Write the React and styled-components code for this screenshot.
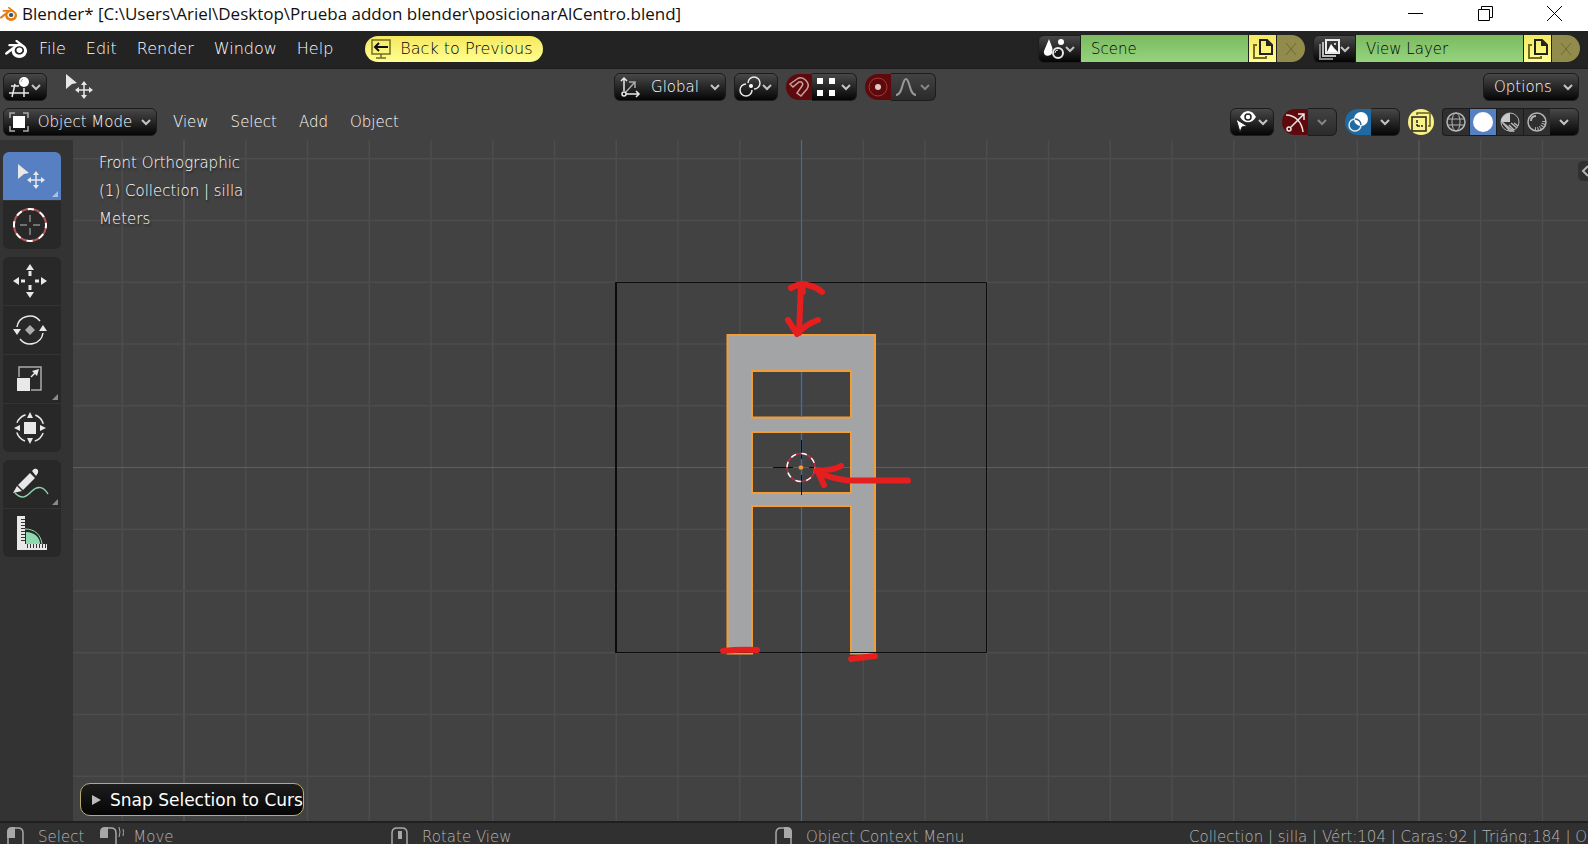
import styled, { createGlobalStyle, css } from 'styled-components'
import { SiBlender } from 'react-icons/si'

const GlobalStyle = createGlobalStyle`
  * { box-sizing: border-box; }
  body { margin: 0; background: #303030; }
  button, input {
    margin: 0;
    padding: 0;
    border: 0;
    background: none;
    color: inherit;
    font: inherit;
  }
`

const Screen = styled.div`
  display: flex;
  flex-direction: column;
  height: 100vh;
  overflow: hidden;
  color: #fff;
  font-family: "DejaVu Sans", Verdana, sans-serif;
  font-size: 15px;
  font-weight: 200;
  line-height: 20px;
  white-space: nowrap;
`

const Svg = styled.svg`
  display: block;
  flex: none;
  overflow: visible;
  fill: none;
  stroke: ${({ $color }) => $color || '#e8e8e8'};
  stroke-width: ${({ $stroke }) => $stroke || 2};
`

/* ---------- title bar ---------- */

const TitleBar = styled.header`
  display: flex;
  align-items: center;
  height: 31px;
  flex: none;
  padding-bottom: 4px;
  overflow: hidden;
  background: #fff;
  color: #111;
`

const TitleLogo = styled.div`
  display: flex;
  width: 22px;
  justify-content: flex-end;
  padding-right: 5px;
`

const Title = styled.h1`
  flex: 1;
  margin: 0;
  font-family: "Open Sans", "Noto Sans", sans-serif;
  font-size: 17px;
  font-weight: 400;
  line-height: 28px;
`

const WindowButton = styled.button`
  display: flex;
  justify-content: center;
  align-items: center;
  width: 70px;
  height: 28px;

  &:last-child { width: 68px; }
`

/* ---------- menus ---------- */

const MenuBar = styled.nav`
  display: flex;
  align-items: center;
  height: 38px;
  flex: none;
  padding: 0 8px 2px 5px;
  border-bottom: 1px solid #1c1c1c;
  background: #232323;
`

const Menus = styled.div`
  display: flex;
  flex: 1;
  align-items: center;
  margin-left: ${({ $left }) => $left}px;
  font-size: ${({ $size }) => $size || 15}px;
`

const MenuButton = styled.button`
  height: 28px;
  padding: 0 ${({ $pad }) => $pad || 11}px;
`

const BackButton = styled.button`
  display: flex;
  align-items: center;
  gap: 9px;
  height: 26px;
  margin-left: 22px;
  padding: 0 10px 0 6px;
  border-radius: 13px;
  background: linear-gradient(#f5e860, #ffff90);
  color: #000;
`

const darkGradient = css`
  background: linear-gradient(#484848, #050505);
`

const fadedGradient = css`
  background: linear-gradient(#424242, #2b2b2b);
`

const DropButton = styled.button`
  display: flex;
  align-items: center;
  justify-content: space-between;
  width: ${({ $width }) => $width}px;
  height: 28px;
  padding: 0 5px;
  border: 1px solid #1c1c1c;
  border-radius: ${({ $join }) => ({ left: '0 6px 6px 0', right: '6px 0 0 6px' }[$join] || '6px')};
  ${({ $faded }) => ($faded ? fadedGradient : darkGradient)}
  border-left-width: ${({ $join }) => ($join === 'left' ? 0 : 1)}px;
  ${({ $only }) => $only && 'justify-content: center;'}
`

const ToggleButton = styled.button`
  display: flex;
  align-items: center;
  justify-content: center;
  width: 26px;
  height: 26px;
  border-radius: ${({ $round }) => ($round ? '13px' : '13px 0 0 13px')};
  background: ${({ $bg }) => $bg};
`

const Joined = styled.div`
  display: flex;
  align-items: center;
`

const OptionsLabel = styled.span`
  padding-left: 5px;
`

const DataBlocks = styled.div`
  display: flex;
  gap: 8px;
`

const NameInput = styled.input`
  width: 168px;
  height: 27px;
  padding: 0 10px;
  border-right: 1px solid #222;
  background: linear-gradient(#7cba60, #94d47c);
  color: #000;
  outline: none;
`

const CopyButton = styled.button`
  display: flex;
  align-items: center;
  justify-content: center;
  width: 28px;
  height: 27px;
  border-right: 1px solid #222;
  background: linear-gradient(#f5e860, #ffff90);
`

const RemoveButton = styled.button`
  display: flex;
  align-items: center;
  justify-content: center;
  width: 28px;
  height: 27px;
  border-radius: 0 14px 14px 0;
  background: #918b4c;
`

/* ---------- viewport header ---------- */

const ViewHeader = styled.div`
  display: grid;
  gap: 7px;
  flex: none;
  padding: 4px 9px 4px 3px;
  background: #424242;
`

const ToolRow = styled.div`
  display: grid;
  grid-template-columns: 1fr auto 1fr;
  align-items: center;
`

const Group = styled.div`
  display: flex;
  align-items: center;
  justify-self: ${({ $align }) => $align || 'start'};
  gap: ${({ $gap }) => $gap || 8}px;
`

const CenterGroup = styled(Group)`
  margin-right: 32px;
`

const HeaderRow = styled.div`
  display: flex;
  align-items: center;
`

const Shading = styled.div`
  display: flex;
  height: 28px;
`

const ShadeButton = styled.button`
  display: flex;
  align-items: center;
  justify-content: center;
  width: 27px;
  border: solid #1c1c1c;
  border-width: 1px 0 1px 1px;
  background: ${({ $active }) => ($active ? '#5680c2' : '#2f2f2f')};

  &:first-child { border-radius: 4px 0 0 4px; }
`

/* ---------- workspace ---------- */

const Workspace = styled.main`
  display: flex;
  flex: 1;
  min-height: 0;
`

const Toolbar = styled.aside`
  display: flex;
  flex-direction: column;
  gap: 8px;
  width: 73px;
  flex: none;
  padding: 12px 12px 0 3px;
  background: #333;
`

const ToolGroup = styled.div`
  display: grid;
  gap: 1px;
  border-radius: 6px;
  overflow: hidden;
`

const ToolButton = styled.button`
  position: relative;
  display: flex;
  align-items: center;
  padding-left: 9px;
  height: 48px;
  background: ${({ $active }) => ($active ? '#5680c2' : '#282828')};

  ${({ $more, $active }) => $more && css`
    &::after {
      content: '';
      position: absolute;
      right: 3px;
      bottom: 3px;
      border: 3px solid transparent;
      border-right-color: ${$active ? '#a9c0e6' : '#8a8a8a'};
      border-bottom-color: ${$active ? '#a9c0e6' : '#8a8a8a'};
    }
  `}
`

const Viewport = styled.section`
  position: relative;
  flex: 1;
  min-width: 0;
  background: #424242;
  overflow: hidden;
`

const Canvas = styled.svg`
  display: block;
  width: 100%;
  height: 100%;
`

const ViewInfo = styled.div`
  position: absolute;
  top: 9px;
  left: 26px;
  line-height: 28px;
  text-shadow: 1px 2px 2px #222;
`

const SideTab = styled.button`
  position: absolute;
  top: 21px;
  right: 0;
  display: flex;
  align-items: center;
  width: 10px;
  height: 20px;
  padding-left: 4px;
  border-radius: 5px 0 0 5px;
  background: #303030;
  overflow: hidden;
`

const OperatorPanel = styled.button`
  position: absolute;
  left: 7px;
  bottom: 5px;
  display: flex;
  align-items: center;
  gap: 9px;
  width: 224px;
  height: 33px;
  padding: 0 0 0 11px;
  border: 1px solid #b5ac6c;
  border-radius: 10px;
  background: linear-gradient(#1d1d1d, #050505);
  font-size: 17px;
  font-weight: 400;
  overflow: hidden;
`

/* ---------- status bar ---------- */

const StatusBar = styled.footer`
  display: grid;
  grid-template-columns: 384fr 384fr 414fr 399fr;
  height: 23px;
  flex: none;
  padding: 4px 0 0 7px;
  border-top: 2px solid #1f1f1f;
  background: #303030;
  color: #b4b4b4;
  overflow: hidden;
`

const Hints = styled.div`
  display: flex;
  gap: 16px;
  min-width: 0;
`

const Hint = styled.div`
  display: flex;
  gap: 14px;
`

const Stats = styled.div`
  min-width: 0;
  overflow: hidden;
`

/* ---------- icons ---------- */

const Chevron = ({ dim }) => (
  <Svg width="10" height="8" $color={dim ? '#858585' : '#c4c4c4'} $stroke={2}>
    <path d="M1 2l4 4 4-4" />
  </Svg>
)

const CopyIcon = () => (
  <Svg width="20" height="20" $color="#222">
    <path d="M7 1h7l5 5v9H7z" />
    <path d="M13 1v6h6z" fill="#222" stroke="none" />
    <path d="M4 6H1v13h12v-2" stroke="#746c25" />
  </Svg>
)

const CrossIcon = () => (
  <Svg width="14" height="14" $color="#6f6a3a" $stroke={1}>
    <path d="M2 1l10 12M12 1L2 13" />
  </Svg>
)

const SceneIcon = () => (
  <Svg width="20" height="22">
    <path d="M5 1L0 13c-1 6 7 6 8 2 0-2 1-4 0-6z" fill="#fff" stroke="none" />
    <circle cx="17" cy="4" r="3" fill="#fff" stroke="none" />
    <circle cx="14" cy="15" r="5" fill="#161616" />
    <path d="M11 15a3 3 0 0 1 3-3" strokeWidth="1" />
  </Svg>
)

const LayerIcon = () => (
  <Svg width="20" height="20">
    <path d="M1 5v15h13" stroke="#888" />
    <path d="M4 3v14h13" stroke="#bbb" />
    <path d="M7 1h13v13H7z" />
    <path d="M8 13l4-8 3 4 4 4z" fill="#fff" stroke="none" />
    <circle cx="16" cy="5" r="1" fill="#fff" stroke="none" />
  </Svg>
)

const BackIcon = () => (
  <Svg width="20" height="20" $color="#746c25" $stroke={1.5}>
    <path d="M1 1h18v14H1zM10 15v4M5 19h10" />
    <path d="M17 8H4M8 4L4 8l4 4" stroke="#111" strokeWidth="2" />
  </Svg>
)

const EditorIcon = () => (
  <Svg width="21" height="21" $stroke={1.5}>
    <path d="M0 16h20M2 9h8M6 7L3 20M15 11v9" />
    <circle cx="15" cy="5" r="5" fill="#fff" stroke="none" />
    <path d="M12 5a3 3 0 0 1 2-3" stroke="#aaa" strokeWidth="1" />
  </Svg>
)

const MoveSelectIcon = ({ size = 28, viewBox = '0 0 28 28' }) => (
  <Svg width={size} height={size} viewBox={viewBox} $stroke={1.5}>
    <path d="M1 1l11 9-5 1-6 5z" fill="#e8e8e8" stroke="none" />
    <path d="M19 10v14M12 17h14" />
    <path d="M19 8l3 4h-6zM19 26l3-4h-6zM10 17l4-3v6zM28 17l-4-3v6z" fill="#e8e8e8" stroke="none" />
  </Svg>
)

const ObjectIcon = () => (
  <Svg width="20" height="20" $color="#aaa" $stroke={1.5}>
    <path d="M1 6V1h5M14 1h5v5M19 14v5h-5M6 19H1v-5" />
    <path d="M4 4h12v12H4z" fill="#fff" stroke="none" />
  </Svg>
)

const AxesIcon = () => (
  <Svg width="20" height="20" $stroke={1.5}>
    <path d="M5 16L15 5M9 5h6v6" stroke="#aaa" />
    <path d="M4 14V1M1 4l3-3 3 3M6 17h13M16 14l3 3-3 3" />
    <circle cx="4" cy="17" r="2" />
  </Svg>
)

const PivotIcon = () => (
  <Svg width="20" height="20" $stroke={1.5}>
    <path d="M8 6a6 6 0 1 1 6 6" />
    <path d="M6 7a6 6 0 1 0 6 6" />
    <circle cx="11" cy="9" r="2" fill="#fff" stroke="none" />
  </Svg>
)

const MagnetIcon = () => (
  <Svg width="20" height="20" $color="#c7a0a0" $stroke={1.5}>
    <path d="M1 7l7-5C14-2 22 6 18 12l-6 7-4-3 5-7c2-3-1-5-3-4l-6 5z" />
  </Svg>
)

const DotsIcon = () => (
  <Svg width="18" height="18">
    <path d="M0 0h6v6H0zM12 0h6v6h-6zM0 12h6v6H0zM12 12h6v6h-6z" fill="#fff" stroke="none" />
  </Svg>
)

const ProportionalIcon = () => (
  <Svg width="20" height="20" $color="#9c3c3c" $stroke={1}>
    <circle cx="10" cy="10" r="9" />
    <circle cx="10" cy="10" r="3" fill="#e0c8c8" stroke="none" />
  </Svg>
)

const FalloffIcon = () => (
  <Svg width="20" height="18" $color="#999">
    <path d="M0 17C7 17 6 1 10 1s3 16 10 16" />
  </Svg>
)

const EyeCursorIcon = () => (
  <Svg width="20" height="22">
    <path d="M4 6c4-8 12-8 16 0-4 7-12 7-16 0z" fill="#fff" stroke="none" />
    <circle cx="12" cy="6" r="3" stroke="#222" strokeWidth="1.5" />
    <path d="M0 8l11 7-5 1-2 5z" fill="#fff" stroke="#222" strokeWidth="1" />
  </Svg>
)

const GizmoIcon = () => (
  <Svg width="21" height="21" $stroke={1.5}>
    <path d="M1 3c9 0 16 7 17 17" />
    <path d="M6 15L19 2M13 2h6v6" />
    <circle cx="4" cy="17" r="2" />
  </Svg>
)

const OverlayIcon = () => (
  <Svg width="20" height="20" $stroke={1.5}>
    <circle cx="13" cy="7" r="7" fill="#fff" stroke="none" />
    <path d="M7 7a6 6 0 1 0 6 6" />
    <path d="M7 7a6 6 0 0 1 6 6" stroke="#206aa4" />
  </Svg>
)

const XrayIcon = () => (
  <Svg width="20" height="20" $color="#222" $stroke={1.5}>
    <path d="M1 5h14v14H1z" />
    <path d="M6 3V1h13v13h-2" stroke="#665f20" />
    <path d="M6 8v6M6 14h6" strokeDasharray="3 1" />
  </Svg>
)

const WireIcon = () => (
  <Svg width="20" height="20" $color="#b5b5b5" $stroke={1}>
    <circle cx="10" cy="10" r="9" strokeWidth="1.5" />
    <ellipse cx="10" cy="10" rx="4" ry="9" />
    <path d="M2 7h16M2 13h16" />
  </Svg>
)

const SolidIcon = () => (
  <Svg width="20" height="20">
    <circle cx="10" cy="10" r="10" fill="#fff" stroke="none" />
  </Svg>
)

const MaterialIcon = () => (
  <Svg width="20" height="20" $color="#b5b5b5" $stroke={1.5}>
    <circle cx="10" cy="10" r="9" strokeWidth="1" />
    <path d="M10 1v9H1a9 9 0 0 1 9-9z" fill="#c9c9c9" stroke="none" />
    <path d="M2 10l8 9h3zM9 13l5 5M11 11l6 5M14 11l4 3" />
  </Svg>
)

const RenderIcon = () => (
  <Svg width="20" height="20" $color="#b5b5b5" $stroke={1.5}>
    <circle cx="10" cy="10" r="9" />
    <path d="M4 9c0-3 2-5 5-5" strokeWidth="2" />
    <path d="M17 9a8 8 0 0 1-9 8" strokeWidth="4" strokeDasharray="1 1.5" />
  </Svg>
)

const CursorToolIcon = () => (
  <Svg width="36" height="36">
    <circle cx="18" cy="18" r="16" stroke="#b55757" />
    <circle cx="18" cy="18" r="16" stroke="#fff" strokeDasharray="6.3 6.3" strokeDashoffset="3" />
    <path d="M18 8v7M18 21v7M8 18h7M21 18h7" stroke="#bbb" strokeWidth="1" />
  </Svg>
)

const MoveIcon = () => (
  <Svg width="36" height="36" $stroke={3}>
    <path d="M18 8v5M18 22v5M9 18h4M23 18h4" />
    <path d="M18 1l4 6h-8zM18 35l4-6h-8zM1 18l6-4v8zM35 18l-6-4v8z" fill="#e8e8e8" stroke="none" />
  </Svg>
)

const RotateIcon = () => (
  <Svg width="36" height="36" $stroke={1.5}>
    <path d="M5 15A13 13 0 0 1 28 9M31 21A13 13 0 0 1 8 27" />
    <path d="M1 17h8l-4 6zM27 19h8l-4-6z" fill="#e8e8e8" stroke="none" />
    <path d="M18 13l5 5-5 5-5-5z" fill="#aaa" stroke="none" />
  </Svg>
)

const ScaleIcon = () => (
  <Svg width="36" height="36" $stroke={1.5}>
    <path d="M7 16V6h22v23H19" stroke="#aaa" />
    <path d="M5 17h13v13H5z" fill="#e8e8e8" stroke="none" />
    <path d="M19 16l6-6" />
    <path d="M27 8l-2 7-5-5z" fill="#e8e8e8" stroke="none" />
  </Svg>
)

const TransformIcon = () => (
  <Svg width="36" height="36" $stroke={1.5}>
    <circle cx="18" cy="18" r="14" strokeDasharray="12 10" strokeDashoffset="-5" />
    <path d="M12 12h12v12H12z" fill="#e8e8e8" stroke="none" />
    <path d="M18 2l3 6h-6zM18 34l3-6h-6zM2 18l6-3v6zM34 18l-6-3v6z" fill="#e8e8e8" stroke="none" />
  </Svg>
)

const AnnotateIcon = () => (
  <Svg width="36" height="36" $stroke={1.5}>
    <path d="M3 27c7 7 11 4 17-2s12-4 16 3" stroke="#8fd3ae" />
    <path d="M6 19L18 7l5 5-12 12zM20 5l2-2c3-1 5 1 4 4l-2 3zM5 20l5 5-9 2z" fill="#e8e8e8" stroke="none" />
  </Svg>
)

const MeasureIcon = () => (
  <Svg width="36" height="36">
    <path d="M14 29V17c8 0 14 5 14 12z" fill="#8fd9b0" stroke="none" />
    <path d="M13 14c10 0 16 6 17 15" stroke="#8fd9b0" strokeWidth="1" />
    <path d="M5 1h8v28h22v6H5z" fill="#e8e8e8" stroke="none" />
    <path d="M11 4v23" stroke="#333" strokeWidth="4" strokeDasharray="1 2" />
    <path d="M15 31h19" stroke="#333" strokeWidth="4" strokeDasharray="1 2" />
  </Svg>
)

const MouseIcon = ({ button }) => (
  <Svg width="17" height="24" $color="#a8a8a8" $stroke={1.5}>
    <path d="M1 24V6q0-5 5-5h5q5 0 5 5v18" />
    {button === 'left' && <path d="M0 11V5q0-5 5-5h3v11z" fill="#a8a8a8" stroke="none" />}
    {button === 'right' && <path d="M17 11V5q0-5-5-5H9v11z" fill="#a8a8a8" stroke="none" />}
    {button === 'middle' && <path d="M9 4v8" strokeWidth="4" />}
  </Svg>
)

const DragMouseIcon = () => (
  <Svg width="19" height="24" $color="#a8a8a8" $stroke={1.5}>
    <path d="M8 1h3q5 0 5 5v18" />
    <path d="M0 11V5q0-5 5-5h3v11z" fill="#a8a8a8" stroke="none" />
    <path d="M19 0q2 5 0 10M23 2q1 3 0 7" strokeWidth="1" />
  </Svg>
)

/* ---------- scene drawing ---------- */

const CENTER = { x: 801.5, y: 467.5 }
const CELL = 61.75
const cells = Array.from({ length: 61 }, (_, i) => i - 30).filter((i) => i !== 0)
const holes = [
  { y: 371, h: 47 },
  { y: 432, h: 61 },
]

function Scene() {
  return (
    <Canvas viewBox="73 140 1515 681" preserveAspectRatio="xMidYMid slice" aria-label="Front view of a chair">
      {cells.map((i) => (
        <g key={i} stroke={i % 10 === 0 ? '#575757' : '#4d4d4d'} strokeWidth="1.5">
          <path d={`M${CENTER.x + i * CELL} -900V1900`} />
          <path d={`M-1200 ${CENTER.y + i * CELL}H2800`} />
        </g>
      ))}
      <path d={`M-1200 ${CENTER.y}H2800`} stroke="#b03a4c" strokeWidth="1.2" />
      <path d={`M${CENTER.x} -900V1900`} stroke="#3a6dae" strokeWidth="1.2" />

      <path
        d="M727.5 335H875V653.5H851V506H752V653.5H727.5zM752 371V417.5H851V371zM752 432V493H851V432z"
        fill="#a3a4a5"
        fillRule="evenodd"
        stroke="#f59d35"
        strokeWidth="2"
      />
      {holes.map(({ y, h }) => (
        <path key={y} d={`M${CENTER.x} ${y + 1}v${h - 2}`} stroke="#3a6dae" strokeWidth="1.2" />
      ))}
      <path d="M616 282.5H986.5V652.5H616" fill="none" stroke="#0c0c0c" />
      <path d="M616 282V653" stroke="#0c0c0c" strokeWidth="2" />

      <path d="M773 467.5h20M809 467.5h20M801.5 440v19M801.5 475v20" stroke="#0c0c0c" />
      <circle cx="801" cy="467.5" r="14" fill="none" stroke="#c02a3c" strokeWidth="1.5" />
      <circle cx="801" cy="467.5" r="14" fill="none" stroke="#fff" strokeWidth="1.5" strokeDasharray="5.5 5.5" />
      <circle cx="801" cy="467.5" r="2.5" fill="#f59d35" stroke="#5a3c1a" strokeWidth="0.5" />

      <g fill="none" stroke="#e61e1e" strokeWidth="6" strokeLinecap="round" strokeLinejoin="round">
        <path d="M801 284L799 333M791 288Q802 282 807 285Q817 287 822 292M788 320L797 334Q806 324 818 320" />
        <path d="M802 286l1 6" />
        <path d="M908 480.5H848Q828 478 816 471M841 466Q832 471 817 470L824 485" />
        <path d="M723 651Q740 649 757 650M851 659L875 656" />
      </g>
    </Canvas>
  )
}

const DataBlock = ({ icon, label, value }) => (
  <Joined>
    <DropButton $width={43} $join="right" aria-label={`Browse ${label}`}>
      {icon}
      <Chevron />
    </DropButton>
    <NameInput aria-label={label} defaultValue={value} />
    <CopyButton aria-label={`New ${label}`}><CopyIcon /></CopyButton>
    <RemoveButton aria-label={`Remove ${label}`}><CrossIcon /></RemoveButton>
  </Joined>
)

const toolGroups = [
  [
    { name: 'Select', icon: <MoveSelectIcon size={36} viewBox="-5 -5 36 36" />, active: true, more: true },
    { name: 'Cursor', icon: <CursorToolIcon /> },
  ],
  [
    { name: 'Move', icon: <MoveIcon /> },
    { name: 'Rotate', icon: <RotateIcon /> },
    { name: 'Scale', icon: <ScaleIcon />, more: true },
    { name: 'Transform', icon: <TransformIcon /> },
  ],
  [
    { name: 'Annotate', icon: <AnnotateIcon />, more: true },
    { name: 'Measure', icon: <MeasureIcon /> },
  ],
]

const shadings = [
  { name: 'Wireframe', icon: <WireIcon /> },
  { name: 'Solid', icon: <SolidIcon />, active: true },
  { name: 'Material', icon: <MaterialIcon /> },
  { name: 'Rendered', icon: <RenderIcon /> },
]

function App() {
  return (
    <>
      <GlobalStyle />
      <Screen>
        <TitleBar>
          <TitleLogo>
            <svg width="20" height="20" viewBox="0 0 24 24">
              <SiBlender size={24} color="#e87d0d" />
              <circle cx="15.7" cy="13.4" r="2.7" fill="#265787" />
            </svg>
          </TitleLogo>
          <Title>Blender* [C:\Users\Ariel\Desktop\Prueba addon blender\posicionarAlCentro.blend]</Title>
          <WindowButton aria-label="Minimize">
            <Svg width="15" height="15" $color="#000" $stroke={1}><path d="M0 7.5h15" /></Svg>
          </WindowButton>
          <WindowButton aria-label="Restore">
            <Svg width="15" height="15" $color="#000" $stroke={1}><path d="M.5 3.5h11v11H.5zM3.5 3V.5h11v11H12" /></Svg>
          </WindowButton>
          <WindowButton aria-label="Close">
            <Svg width="15" height="15" $color="#000" $stroke={1}><path d="M0 0l15 15M15 0L0 15" /></Svg>
          </WindowButton>
        </TitleBar>

        <MenuBar>
          <SiBlender size={22} />
          <Menus $left={2} $size={16}>
            {['File', 'Edit', 'Render', 'Window', 'Help'].map((name) => (
              <MenuButton key={name} $pad={10}>{name}</MenuButton>
            ))}
            <BackButton><BackIcon />Back to Previous</BackButton>
          </Menus>
          <DataBlocks>
            <DataBlock icon={<SceneIcon />} label="scene" value="Scene" />
            <DataBlock icon={<LayerIcon />} label="view layer" value="View Layer" />
          </DataBlocks>
        </MenuBar>

        <ViewHeader>
          <ToolRow>
            <Group $gap={18}>
              <DropButton $width={44} aria-label="Editor type"><EditorIcon /><Chevron /></DropButton>
              <MoveSelectIcon />
            </Group>
            <CenterGroup>
              <DropButton $width={112}><AxesIcon />Global<Chevron /></DropButton>
              <DropButton $width={44} aria-label="Pivot point"><PivotIcon /><Chevron /></DropButton>
              <Joined>
                <ToggleButton $bg="#5e0a0c" aria-label="Snap"><MagnetIcon /></ToggleButton>
                <DropButton $width={45} $join="left" aria-label="Snap to"><DotsIcon /><Chevron /></DropButton>
              </Joined>
              <Joined>
                <ToggleButton $bg="#5e0a0c" aria-label="Proportional editing"><ProportionalIcon /></ToggleButton>
                <DropButton $width={45} $join="left" $faded aria-label="Falloff"><FalloffIcon /><Chevron dim /></DropButton>
              </Joined>
            </CenterGroup>
            <Group $align="end">
              <DropButton $width={96}><OptionsLabel>Options</OptionsLabel><Chevron /></DropButton>
            </Group>
          </ToolRow>
          <HeaderRow>
            <DropButton $width={154}><ObjectIcon />Object Mode<Chevron /></DropButton>
            <Menus $left={5}>
              {['View', 'Select', 'Add', 'Object'].map((name) => (
                <MenuButton key={name}>{name}</MenuButton>
              ))}
            </Menus>
            <Group>
              <DropButton $width={44} aria-label="Object visibility"><EyeCursorIcon /><Chevron /></DropButton>
              <Joined>
                <ToggleButton $bg="#5e0a0c" aria-label="Gizmos"><GizmoIcon /></ToggleButton>
                <DropButton $width={29} $join="left" $faded $only aria-label="Gizmo options"><Chevron dim /></DropButton>
              </Joined>
              <Joined>
                <ToggleButton $bg="#206aa4" aria-label="Overlays"><OverlayIcon /></ToggleButton>
                <DropButton $width={29} $join="left" $only aria-label="Overlay options"><Chevron /></DropButton>
              </Joined>
              <ToggleButton $bg="#fbf285" $round aria-label="X-ray"><XrayIcon /></ToggleButton>
              <Shading>
                {shadings.map(({ name, icon, active }) => (
                  <ShadeButton key={name} $active={active} aria-label={name}>{icon}</ShadeButton>
                ))}
                <DropButton $width={29} $join="left" $only aria-label="Shading options"><Chevron /></DropButton>
              </Shading>
            </Group>
          </HeaderRow>
        </ViewHeader>

        <Workspace>
          <Toolbar>
            {toolGroups.map((tools, i) => (
              <ToolGroup key={i}>
                {tools.map(({ name, icon, active, more }) => (
                  <ToolButton key={name} $active={active} $more={more} aria-label={name}>{icon}</ToolButton>
                ))}
              </ToolGroup>
            ))}
          </Toolbar>
          <Viewport>
            <Scene />
            <ViewInfo>
              <div>Front Orthographic</div>
              <div>(1) Collection | silla</div>
              <div>Meters</div>
            </ViewInfo>
            <SideTab aria-label="Show sidebar">
              <Svg width="8" height="12" $color="#b5b5b5"><path d="M6 1L1 6l5 5" /></Svg>
            </SideTab>
            <OperatorPanel>
              <Svg width="9" height="10"><path d="M0 0l9 5-9 5z" fill="#bbb" stroke="none" /></Svg>
              Snap Selection to Curs
            </OperatorPanel>
          </Viewport>
        </Workspace>

        <StatusBar>
          <Hints>
            <Hint><MouseIcon button="left" />Select</Hint>
            <Hint><DragMouseIcon />Move</Hint>
          </Hints>
          <Hint><MouseIcon button="middle" />Rotate View</Hint>
          <Hint><MouseIcon button="right" />Object Context Menu</Hint>
          <Stats>Collection | silla | Vért:104 | Caras:92 | Triáng:184 | Objetos:1</Stats>
        </StatusBar>
      </Screen>
    </>
  )
}

export default App
